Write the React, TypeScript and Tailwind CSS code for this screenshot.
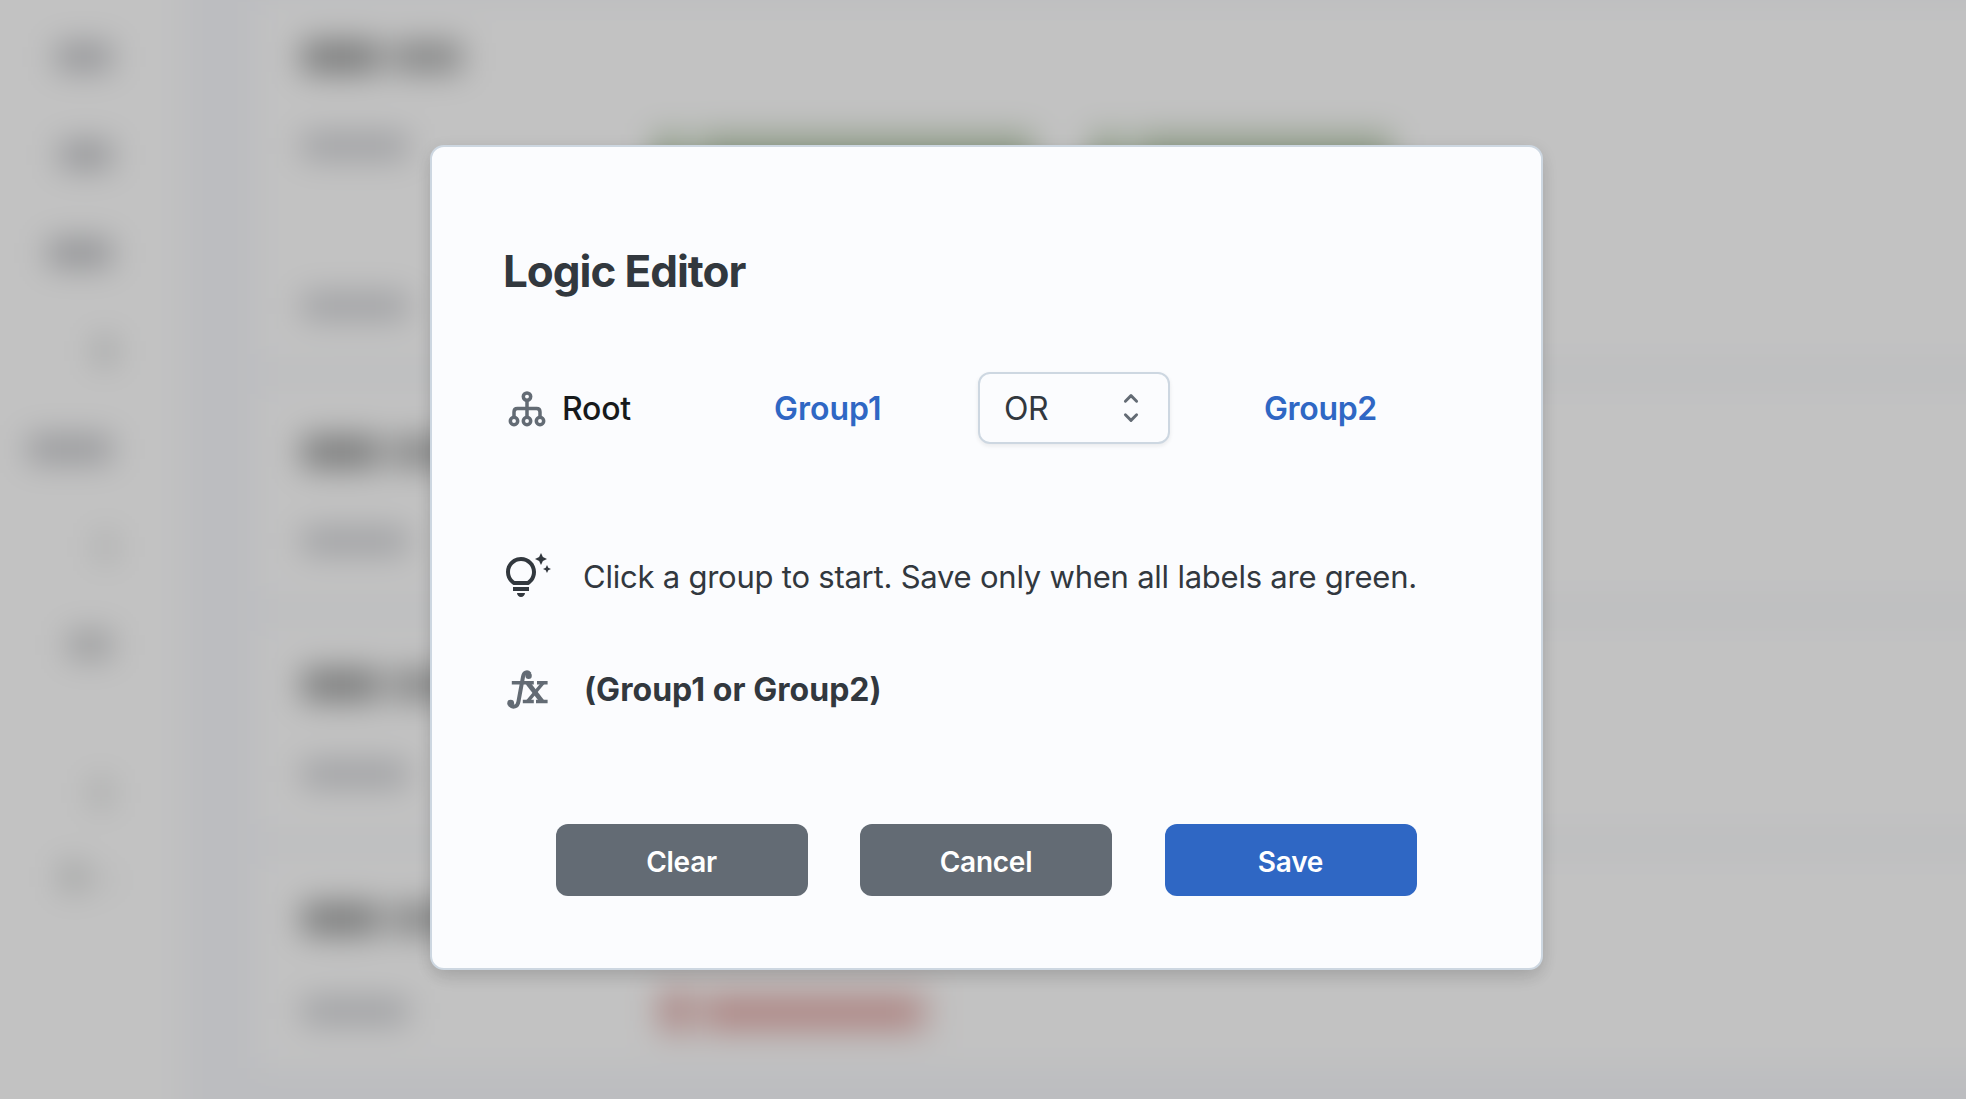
import { MdOutlineTipsAndUpdates } from "react-icons/md";

function HierarchyIcon() {
  return (
    <svg viewBox="0 0 38 36" className="h-9 w-[38px]" fill="none" stroke="currentColor" strokeWidth="3.5">
      <circle cx="19" cy="5.6" r="3.7" />
      <circle cx="6" cy="30" r="3.7" />
      <circle cx="19" cy="30" r="3.7" />
      <circle cx="32" cy="30" r="3.7" />
      <path d="M19 9v17.5M6 26.5V21q0-3.4 3.4-3.4h19.2q3.4 0 3.4 3.4v5.5" />
    </svg>
  );
}

function FormulaIcon() {
  return (
    <svg viewBox="0 0 48 48" className="size-12" fill="none" stroke="currentColor" strokeWidth="4">
      <path d="M26.8 9c-2.6-3-6-1.6-6.8 2.800l-4.600 25c-.9 5-5.600 6.200-8.400 3.200" />
      <circle cx="25.6" cy="10.800" r="3.200" fill="currentColor" stroke="none" />
      <circle cx="7.700" cy="38.200" r="3.400" fill="currentColor" stroke="none" />
      <path d="M8.800 17.700h22M34 17.700h10.600M19.800 36.400h11M33 36.400h11.600" strokeWidth="3.500" />
      <path d="M24.800 18l14.200 18.400" strokeWidth="4.800" />
      <path d="M40 18L24.600 36.400" strokeWidth="3.500" />
    </svg>
  );
}

function SelectArrows() {
  return (
    <svg viewBox="0 0 16 32" className="h-8 w-4" fill="none" stroke="currentColor" strokeWidth="2.9" strokeLinecap="round" strokeLinejoin="round">
      <path d="M2.400 9.200L8 3.600l5.600 5.600M2.400 22.800L8 28.400l5.600-5.600" />
    </svg>
  );
}

const navItems = [
  "h-[26px] w-[56px] bg-[#909194]",
  "h-[26px] w-[52px] bg-[#909194]",
  "h-[26px] w-[64px] bg-[#8d8e91]",
  "h-[26px] w-[14px] bg-[#8e908f]",
  "h-[26px] w-[84px] bg-[#949598]",
  "h-[26px] w-[12px] bg-[#989a99]",
  "h-[26px] w-[44px] bg-[#98999a]",
];

function CardTitle() {
  return (
    <div className="flex h-8 items-center gap-3">
      <div className="h-[32px] w-[78px] bg-[#787979]" />
      <div className="h-[30px] w-[70px] bg-[#838484]" />
    </div>
  );
}

function Label() {
  return <div className="h-6 w-[106px] bg-[#9b9c9f]" />;
}

function BackdropPage() {
  return (
    <div className="absolute -inset-10 flex overflow-hidden bg-[#bcbdc0] p-10 blur-[16px]">
      <nav className="-my-10 -ml-10 flex w-[222px] shrink-0 flex-col items-end bg-[#c2c2c2] pt-[84px] pr-[70px]">
        <div className="flex flex-col items-end gap-[72px]">
          {navItems.map((shape, i) => (
            <div key={i} className={shape} />
          ))}
        </div>
        <div className="mt-[122px] mr-1 h-[26px] w-[14px] bg-[#989a99]" />
        <div className="mt-[58px] flex gap-3">
          <div className="h-[26px] w-[22px] bg-[#989a99]" />
          <div className="mt-3 h-2 w-4 bg-[#a2a4a3]" />
        </div>
      </nav>
      <main className="-mr-10 ml-[76px] flex grow flex-col gap-5">
        <section className="h-[364px] bg-[#c2c2c2] pt-[41px] pl-[44px]">
          <CardTitle />
          <div className="mt-[61px] flex">
            <Label />
            <div className="ml-[246px] flex h-11 w-[380px] gap-4 bg-[#b7bdb4]">
              <div className="h-full w-7 bg-[#8b9a84]" />
              <div className="h-full grow bg-[#8f9c88]" />
            </div>
            <div className="ml-[58px] flex h-11 w-[300px] gap-4 bg-[#b7bdb4]">
              <div className="h-full w-7 bg-[#8b9a84]" />
              <div className="h-full grow bg-[#8f9c88]" />
            </div>
          </div>
          <div className="mt-[116px]">
            <Label />
          </div>
        </section>
        <section className="h-[217px] bg-[#c2c2c2] pt-[52px] pl-[44px]">
          <CardTitle />
          <div className="mt-[61px]">
            <Label />
          </div>
        </section>
        <section className="h-[213px] bg-[#c2c2c2] pt-[48px] pl-[44px]">
          <CardTitle />
          <div className="mt-[61px]">
            <Label />
          </div>
        </section>
        <section className="h-[214px] bg-[#c2c2c2] pt-[49px] pl-[44px]">
          <CardTitle />
          <div className="mt-[50px] flex items-center">
            <Label />
            <div className="ml-[246px] flex h-[52px] w-[282px] items-center gap-4 bg-[#bdb4b3] pl-2">
              <div className="h-9 w-7 bg-[#ab8381]" />
              <div className="mt-1 h-[30px] w-[214px] bg-[#ad8381]" />
            </div>
          </div>
        </section>
      </main>
    </div>
  );
}

export default function App() {
  return (
    <div className="relative flex h-[1099px] w-[1966px] overflow-hidden bg-[#c2c2c2] font-['Inter',sans-serif] text-[#32383e]">
      <BackdropPage />
      <div
        role="dialog"
        className="relative mt-[145px] ml-[430px] h-[825px] w-[1113px] rounded-[14px] border-2 border-[#cdd7e1] bg-[#fbfcfe] px-[71px] pt-[98px] shadow-[0_4px_16px_rgba(21,21,21,0.10),0_10px_20px_-6px_rgba(21,21,21,0.12)]"
      >
        <h1 className="text-[44px] leading-[52px] font-bold tracking-[-1.05px]">Logic Editor</h1>

        <div className="mt-[75px] grid h-[72px] grid-cols-[271px_204px_192px_1fr] items-center text-[32px] leading-10">
          <div className="flex items-center gap-4 pt-px pl-[5px]">
            <span className="text-[#636b74]">
              <HierarchyIcon />
            </span>
            <span className="pt-px font-medium tracking-[-0.2px] text-[#171a1c]">Root</span>
          </div>
          <a className="pt-0.5 font-semibold text-[#2f67c4]">Group1</a>
          <button className="flex h-[72px] items-center justify-between rounded-xl border-2 border-[#cdd7e1] bg-[#fbfcfe] pr-[29px] pl-6 shadow-[0_2px_4px_rgba(21,21,21,0.08)]">
            <span className="pt-0.5 tracking-[-0.4px]">OR</span>
            <span className="text-[#636b74]">
              <SelectArrows />
            </span>
          </button>
          <a className="pt-0.5 pl-[94px] font-semibold tracking-[-0.35px] text-[#2f67c4]">Group2</a>
        </div>

        <div className="mt-[109px] flex h-12 items-center gap-8">
          <MdOutlineTipsAndUpdates className="size-12 shrink-0" />
          <p className="text-[31px] leading-10 tracking-[-0.23px] whitespace-nowrap">
            Click a group to start. Save only when all labels are green.
          </p>
        </div>

        <div className="mt-16 flex h-12 items-center gap-[33px]">
          <span className="shrink-0 text-[#636b74]">
            <FormulaIcon />
          </span>
          <p className="pt-0.5 text-[32px] leading-10 font-bold tracking-[0.05px]">(Group1 or Group2)</p>
        </div>

        <div className="mt-[111px] ml-[53px] flex gap-[52px] text-[28px] font-semibold tracking-[-0.25px] text-white">
          <button className="h-[72px] w-[252px] rounded-xl bg-[#636b74] pt-[3px] pr-px">Clear</button>
          <button className="h-[72px] w-[252px] rounded-xl bg-[#636b74] pt-[3px]">Cancel</button>
          <button className="ml-px h-[72px] w-[252px] rounded-xl bg-[#2f67c4] pt-[3px] pr-px">Save</button>
        </div>
      </div>
    </div>
  );
}
